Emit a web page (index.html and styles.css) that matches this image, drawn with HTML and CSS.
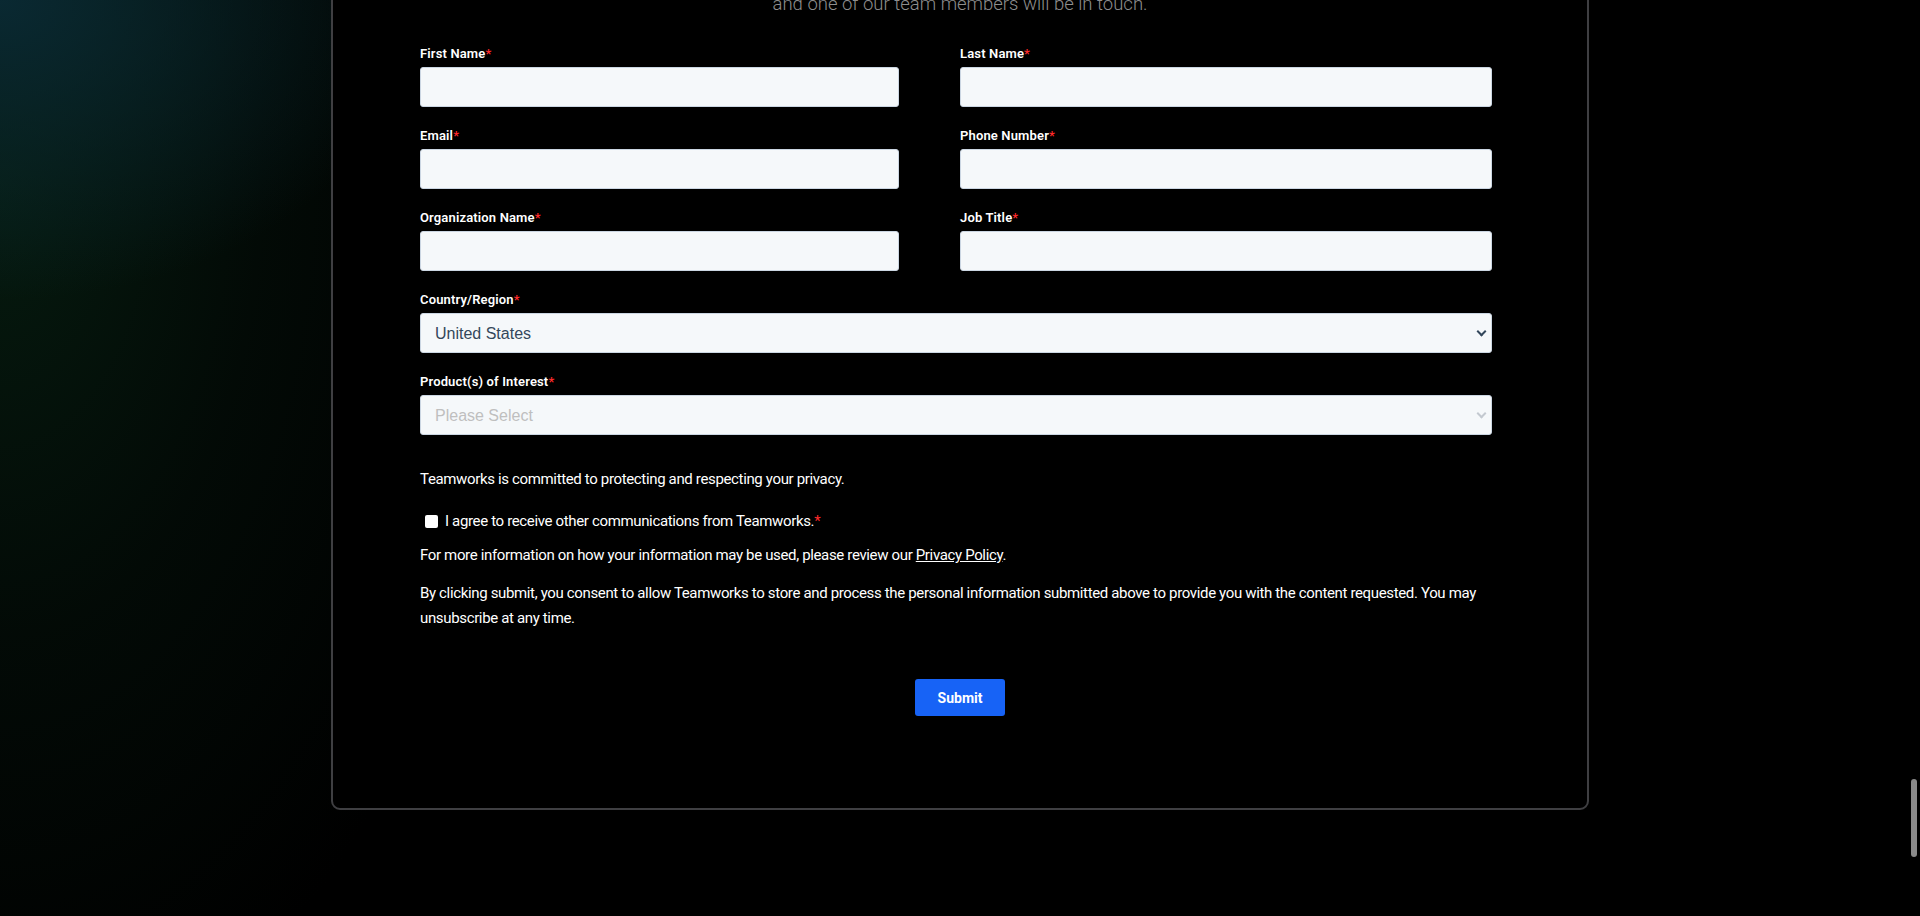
FILE: index.html
```html
<!DOCTYPE html>
<html lang="en">
<head>
    <meta charset="UTF-8">
    <meta name="viewport" content="width=device-width, initial-scale=1.0">
    <title>Contact Us - Teamworks</title>
    <link rel="stylesheet" href="styles.css">
</head>
<body>
    <div class="page">
        <section class="contact-card">
            <p class="intro">and one of our team members will be in touch.</p>

            <form class="contact-form" onsubmit="return false;">
                <div class="field-row">
                    <div class="field">
                        <label for="firstname">First Name<span class="req">*</span></label>
                        <input type="text" id="firstname">
                    </div>
                    <div class="field">
                        <label for="lastname">Last Name<span class="req">*</span></label>
                        <input type="text" id="lastname">
                    </div>
                </div>
                <div class="field-row">
                    <div class="field">
                        <label for="email">Email<span class="req">*</span></label>
                        <input type="email" id="email">
                    </div>
                    <div class="field">
                        <label for="phone">Phone Number<span class="req">*</span></label>
                        <input type="tel" id="phone">
                    </div>
                </div>
                <div class="field-row">
                    <div class="field">
                        <label for="company">Organization Name<span class="req">*</span></label>
                        <input type="text" id="company">
                    </div>
                    <div class="field">
                        <label for="jobtitle">Job Title<span class="req">*</span></label>
                        <input type="text" id="jobtitle">
                    </div>
                </div>
                <div class="field">
                    <label for="country">Country/Region<span class="req">*</span></label>
                    <div class="select-wrap">
                        <select id="country">
                            <option>United States</option>
                            <option>Canada</option>
                            <option>United Kingdom</option>
                        </select>
                    </div>
                </div>
                <div class="field">
                    <label for="products">Product(s) of Interest<span class="req">*</span></label>
                    <div class="select-wrap empty">
                        <select id="products">
                            <option value="" selected>Please Select</option>
                            <option>Strength &amp; Conditioning</option>
                            <option>Communication</option>
                        </select>
                    </div>
                </div>

                <div class="legal">
                    <p>Teamworks is committed to protecting and respecting your privacy.</p>
                    <label class="consent">
                        <input type="checkbox">
                        <span>I agree to receive other communications from Teamworks.<span class="req">*</span></span>
                    </label>
                    <p>For more information on how your information may be used, please review our <a href="#">Privacy Policy</a>.</p>
                    <p class="long">By clicking submit, you consent to allow Teamworks to store and process the personal information submitted above to provide you with the content requested. You may unsubscribe at any time.</p>
                </div>
            </form>

            <div class="actions">
                <button type="submit" class="submit-button">Submit</button>
            </div>
        </section>
    </div>

    <div class="scroll-thumb"></div>
</body>
</html>
```

FILE: styles.css
```css
html, body {
    height: 100%;
}
body {
    margin: 0;
    overflow: hidden;
    font-family: Roboto, "Liberation Sans", Arial, sans-serif;
    color: #ffffff;
    background:
        radial-gradient(ellipse 420px 300px at 0 0, rgba(10, 42, 52, 0.95), rgba(10, 42, 52, 0) 100%),
        radial-gradient(ellipse 520px 900px at 0 20%, rgba(6, 28, 16, 0.95) 0%, rgba(5, 20, 12, 0.5) 50%, rgba(0, 0, 0, 0) 100%),
        #000000;
}
.page {
    display: flex;
    justify-content: center;
}
.contact-card {
    width: 1258px;
    box-sizing: border-box;
    margin-top: -40px;
    padding: 28px 87px 92px;
    background-color: #000000;
    border: 2px solid #3f3f42;
    border-radius: 9px;
}
.intro {
    margin: 0 0 28px;
    text-align: center;
    font-size: 18.5px;
    font-weight: 300;
    line-height: 28px;
    color: #8e8e8e;
}
.contact-form {
    width: 1072px;
    display: flex;
    flex-direction: column;
    gap: 21px;
}
.field-row {
    display: grid;
    grid-template-columns: 479px 1fr;
    column-gap: 61px;
}
.field label {
    display: block;
    margin-bottom: 5px;
    font-size: 13px;
    font-weight: 600;
    line-height: 16px;
    letter-spacing: 0.15px;
    color: #ffffff;
}
.req {
    color: #ff2a2a;
}
.field input,
.field select {
    display: block;
    width: 100%;
    height: 40px;
    box-sizing: border-box;
    padding: 0 14px;
    background-color: #f5f8fa;
    border: 1px solid #cbd6e2;
    border-radius: 3px;
    font-family: "Liberation Sans", Arial, sans-serif;
    font-size: 16px;
    color: #33475b;
    outline: none;
}
.field select {
    appearance: none;
    -webkit-appearance: none;
}
.select-wrap {
    position: relative;
}
.select-wrap::after {
    content: "";
    position: absolute;
    right: 7px;
    top: 15px;
    width: 5px;
    height: 5px;
    border-right: 2px solid #33475b;
    border-bottom: 2px solid #33475b;
    transform: rotate(45deg);
    pointer-events: none;
}
.select-wrap.empty select {
    color: #bfbfbf;
}
.select-wrap.empty::after {
    border-color: #c3c9d0;
}
.legal {
    margin-top: 11px;
    font-size: 15px;
    line-height: 24px;
    letter-spacing: -0.35px;
}
.legal p {
    margin: 0;
}
.legal p.long {
    margin-top: 14px;
    line-height: 24.5px;
}
.legal a {
    color: #ffffff;
    text-decoration: underline;
}
.consent {
    display: flex;
    align-items: center;
    margin: 18px 0 10px;
}
.consent input {
    appearance: none;
    -webkit-appearance: none;
    width: 13px;
    height: 13px;
    margin: 0 7px 0 5px;
    background-color: #ffffff;
    border-radius: 2px;
}
.actions {
    display: flex;
    justify-content: center;
    margin-top: 49px;
}
.submit-button {
    height: 37px;
    padding: 0 23px;
    background-color: #1763f6;
    color: #ffffff;
    border: none;
    border-radius: 3px;
    font-family: Roboto, "Liberation Sans", Arial, sans-serif;
    font-size: 14px;
    font-weight: 700;
    cursor: pointer;
}
.submit-button:hover {
    background-color: #0f52d4;
}
.scroll-thumb {
    position: fixed;
    right: 3px;
    top: 779px;
    width: 6px;
    height: 78px;
    background-color: #8a8a8a;
    border-radius: 3px;
}
```
